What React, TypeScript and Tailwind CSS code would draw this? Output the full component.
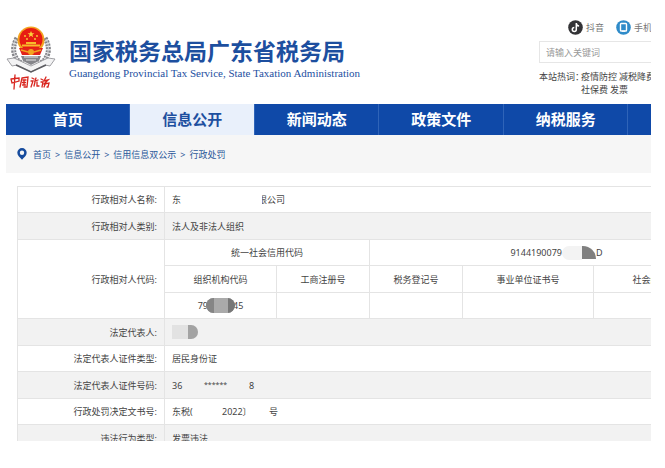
import React from "react";

const rowBorder = "border-b border-[#e4e4e4]";

function Emblem() {
  return (
    <svg viewBox="0 0 50 48" className="h-12 w-[50px]" aria-hidden="true">
      <g fill="none" stroke="#85858a" strokeWidth="5" strokeDasharray="2.2 1">
        <path d="M11 12C5 22 7 33 17 38" />
        <path d="M39 12C45 22 43 33 33 38" />
      </g>
      <g fill="none" stroke="#d4d4d7" strokeWidth="1">
        <path d="M10 13C5 22 8 33 17 38" />
        <path d="M40 13C45 22 42 33 33 38" />
      </g>
      <path d="M1 33l7-1 17 8 17-8 7 1-5 7-5-1-14 7-14-7-5 1z" fill="#f3f3f4" stroke="#a0a0a4" strokeWidth="1" />
      <path d="M10 39l15 7 15-7" fill="none" stroke="#5c5c61" strokeWidth="1.5" />
      <path d="M15 30h20l-2 5-8 4-8-4z" fill="#85858a" />
      <path d="M18 31h14M20 34h10" stroke="#e4e4e6" strokeWidth="1" />
      <circle cx="25" cy="14" r="13.500" fill="#f3a421" />
      <circle cx="25" cy="13.500" r="11.500" fill="#e71b12" />
      <path d="M13 22h24l-3 7H16z" fill="#e2231a" />
      <path d="M16 18.500h18v2H16zM20 16h10v2H20z" fill="#f7b92c" />
      <path d="M25 5l1 2.300h2.400l-2 1.500.8 2.400-2.200-1.500-2.200 1.500.8-2.400-2-1.500H24z" fill="#fbd13a" />
      <g fill="#fbd13a">
        <circle cx="19" cy="10" r="0.9" /><circle cx="31" cy="10" r="0.9" />
        <circle cx="21" cy="13" r="0.9" /><circle cx="29" cy="13" r="0.9" />
      </g>
      <circle cx="25" cy="26" r="3" fill="#f3a421" />
      <path d="M15 24l7 2M35 24l-7 2" stroke="#f3a421" strokeWidth="1.5" />
    </svg>
  );
}

function Script() {
  return (
    <svg viewBox="0 0 40 17" className="h-[17px] w-10" fill="none" stroke="#d9261f" strokeWidth="1.3" strokeLinecap="round" role="img" aria-label="中国税务">
      <path d="M1 5l1 4 7-2 0-3-8 1M5 1l-1 14" />
      <path d="M12 4l-2 9M12 4l6-1-1 10-3 0M13 6l3 0M14 6v5M12.500 8.500h3M12.500 11h3" />
      <path d="M22 4l2 1M21 7l2 0-2 6M26 4l-1 3 3-1M25 8l-1 4M27 8l0 4 2 0" />
      <path d="M31 5l2 1M31 8l2 0-1 5M36 3l-2 4 4-1-4 4M34 10l5-1-1 4-1 0M36 8l-2 5" />
    </svg>
  );
}

function Douyin() {
  return (
    <svg viewBox="0 0 15 15" className="size-[15px]" aria-hidden="true">
      <circle cx="7.5" cy="7.5" r="7.3" fill="#333336" />
      <path d="M8.300 3v6.600a2 2 0 1 1-2-2M8.300 3.400c.3 1.700 1.300 2.500 2.800 2.600" fill="none" stroke="#fff" strokeWidth="1.5" />
    </svg>
  );
}

function Phone() {
  return (
    <svg viewBox="0 0 15 15" className="size-[15px]" aria-hidden="true">
      <circle cx="7.5" cy="7.5" r="7.3" fill="#2f8bc9" />
      <rect x="4.500" y="3.500" width="6" height="7.500" rx="0.8" fill="none" stroke="#fff" strokeWidth="1.4" />
      <path d="M6 11.200h3" stroke="#fff" strokeWidth="1.200" />
    </svg>
  );
}

const nav = ["首页", "信息公开", "新闻动态", "政策文件", "纳税服务"];
const crumbs = ["首页", "信息公开", "信用信息双公示", "行政处罚"];

function Row({ label, shaded, children }: { label: string; shaded?: boolean; children: React.ReactNode }) {
  return (
    <tr className={shaded ? "bg-[#f2f2f2]" : "bg-white"}>
      <Label>{label}</Label>
      <td colSpan={5} className={`pl-[7px] ${rowBorder}`}>{children}</td>
    </tr>
  );
}

function Label({ children, span }: { children: React.ReactNode; span?: number }) {
  return (
    <th scope="row" rowSpan={span} className={`border-r border-l pr-[7px] text-right font-normal ${rowBorder}`}>
      {children}:
    </th>
  );
}

const cell = `border-r text-center font-normal ${rowBorder}`;

export default function App() {
  return (
    <div className="h-[441px] overflow-hidden bg-white pr-[14px] pl-[6px] font-['Noto_Sans','Noto_Sans_CJK_SC',sans-serif] text-[9px] leading-[13px] text-[#444]">
      <header className="flex h-[104px] overflow-hidden">
        <div className="flex w-[63px] shrink-0 flex-col pt-[26px]">
          <Emblem />
          <div className="pl-1"><Script /></div>
        </div>
        <div className="min-w-0 flex-1 pt-[35px] whitespace-nowrap text-[#1d4f9f]">
          <h1 className="font-['Noto_Sans_CJK_SC',sans-serif] text-[23px] leading-[30px] font-bold">国家税务总局广东省税务局</h1>
          <p className="font-['Liberation_Serif',serif] text-[11px] leading-4">Guangdong Provincial Tax Service, State Taxation Administration</p>
        </div>
        <div className="w-[112px] shrink-0 pt-5 whitespace-nowrap">
          <div className="flex gap-3 pl-[29px] text-[#777]">
            <a href="#douyin" className="flex items-center gap-[3px]"><Douyin />抖音</a>
            <a href="#mobile" className="flex items-center gap-[3px]"><Phone />手机</a>
          </div>
          <input aria-label="请输入关键词" placeholder="请输入关键词" className="mt-[6px] block h-[22px] w-full border border-r-0 border-[#e6e6e6] px-[6px] placeholder:text-[#999]" />
          <div className="mt-[7px] flex">
            <span className="w-[42px] shrink-0">本站热词：</span>
            <div>
              <p className="flex gap-[2px]"><a href="#hot">疫情防控</a><a href="#hot">减税降费</a></p>
              <p className="flex gap-[2px]"><a href="#hot">社保费</a><a href="#hot">发票</a></p>
            </div>
          </div>
        </div>
      </header>

      <nav className="flex h-[31px] overflow-hidden bg-[#0f49a8] text-[15px] leading-[30px] font-bold text-white">
        {nav.map((n) => (
          <a key={n} href="#nav" className={`w-[19.3%] shrink-0 border-r border-[#2f64b8] text-center ${n === "信息公开" ? "bg-[#e9f0fb] text-[#1d4f9f]" : ""}`}>{n}</a>
        ))}
      </nav>

      <div className="flex h-[38px] items-center gap-[6px] bg-[#f6f6f6] pl-[11px] text-[#2a5699]">
        <svg viewBox="0 0 10 12" className="h-3 w-[10px]" aria-hidden="true">
          <path fillRule="evenodd" d="M5 0a4.700 4.700 0 0 1 4.700 4.700C9.700 7.500 7 9.500 5 11.700 3 9.500.3 7.500.3 4.700A4.700 4.700 0 0 1 5 0zm0 2.500a2.200 2.200 0 1 0 0 4.400 2.200 2.200 0 0 0 0-4.400z" fill="#164b9d" />
        </svg>
        <div className="flex gap-1">
          {crumbs.map((c, i) => (
            <React.Fragment key={c}>
              {i > 0 && <span>&gt;</span>}
              <a href="#crumb">{c}</a>
            </React.Fragment>
          ))}
        </div>
      </div>

      <div className="overflow-hidden pt-[13px] pl-[11px]">
        <table className="w-[727px] table-fixed border-separate border-spacing-0 border-t border-[#e4e4e4] [&_tr]:h-[26px] [&_tr:nth-child(even)]:h-[27px]">
          <colgroup>
            <col className="w-[148px]" />
            <col className="w-[112px]" />
            <col className="w-[93px]" />
            <col className="w-[93px]" />
            <col className="w-[131px]" />
            <col className="w-[150px]" />
          </colgroup>
          <tbody>
            <Row label="行政相对人名称">
              <div className="flex">
                <span className="w-[90px]">东</span>
                <span className="flex w-[5px] justify-end overflow-hidden">限</span>
                <span>公司</span>
              </div>
            </Row>
            <Row label="行政相对人类别" shaded>法人及非法人组织</Row>
            <tr>
              <Label span={3}>行政相对人代码</Label>
              <th colSpan={2} className={cell}>统一社会信用代码</th>
              <td colSpan={3} className={cell}>
                <div className="flex items-center justify-center">
                  9144190079
                  <span className="h-[14px] w-5 rounded-l-full bg-[#f3f3f3]" />
                  <span className="h-[13px] w-[14px] rounded-tr-full bg-[#808080]" />
                  D
                </div>
              </td>
            </tr>
            <tr>
              <th className={cell}>组织机构代码</th>
              <th className={cell}>工商注册号</th>
              <th className={cell}>税务登记号</th>
              <th className={cell}>事业单位证书号</th>
              <th className={cell}>社会组织登记证号</th>
            </tr>
            <tr>
              <td className={cell}>
                <div className="flex items-center justify-center">
                  79
                  <span className="relative -mx-[2px] flex h-[15px] w-[29px] overflow-hidden rounded-full bg-[#aaa]">
                    <span className="w-2 bg-[#858585]" />
                    <span className="ml-auto w-[7px] bg-[#777]" />
                  </span>
                  45
                </div>
              </td>
              <td className={cell} /><td className={cell} /><td className={cell} /><td className={cell} />
            </tr>
            <Row label="法定代表人" shaded>
              <div className="flex h-[14px] w-[26px] overflow-hidden rounded-r-full rounded-l-md bg-[#e2e2e2]">
                <span className="ml-auto w-[10px] bg-[#a3a3a3]" />
              </div>
            </Row>
            <Row label="法定代表人证件类型">居民身份证</Row>
            <Row label="法定代表人证件号码" shaded>
              <div className="flex"><span className="w-8">36</span><span className="w-[45px] text-[7px] leading-[11px]">******</span><span>8</span></div>
            </Row>
            <Row label="行政处罚决定文书号">
              <div className="flex"><span className="w-[50px]">东税(</span><span className="w-[47px]">2022〕</span><span>号</span></div>
            </Row>
            <Row label="违法行为类型" shaded>发票违法</Row>
          </tbody>
        </table>
      </div>
    </div>
  );
}
